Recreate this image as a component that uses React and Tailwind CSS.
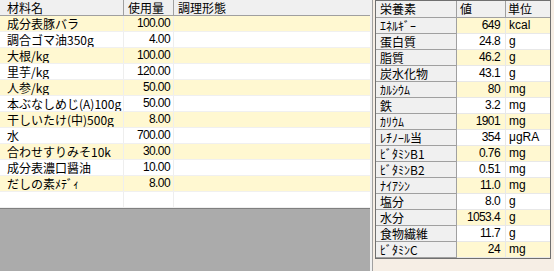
import React from "react";

const ingredients = [
  ["成分表豚バラ", "100.00"],
  ["調合ゴマ油350g", "4.00"],
  ["大根/kg", "100.00"],
  ["里芋/kg", "120.00"],
  ["人参/kg", "50.00"],
  ["本ぶなしめじ(A)100g", "50.00"],
  ["干しいたけ(中)500g", "8.00"],
  ["水", "700.00"],
  ["合わせすりみそ10k", "30.00"],
  ["成分表濃口醤油", "10.00"],
  ["だしの素ﾒﾃﾞｨ", "8.00"],
  ["", ""],
];

const nutrients = [
  ["ｴﾈﾙｷﾞｰ", "649", "kcal"],
  ["蛋白質", "24.8", "g"],
  ["脂質", "46.2", "g"],
  ["炭水化物", "43.1", "g"],
  ["ｶﾙｼｳﾑ", "80", "mg"],
  ["鉄", "3.2", "mg"],
  ["ｶﾘｳﾑ", "1901", "mg"],
  ["ﾚﾁﾉｰﾙ当", "354", "μgRA"],
  ["ﾋﾞﾀﾐﾝB1", "0.76", "mg"],
  ["ﾋﾞﾀﾐﾝB2", "0.51", "mg"],
  ["ﾅｲｱｼﾝ", "11.0", "mg"],
  ["塩分", "8.0", "g"],
  ["水分", "1053.4", "g"],
  ["食物繊維", "11.7", "g"],
  ["ﾋﾞﾀﾐﾝC", "24", "mg"],
];

const jp = { fontFamily: '"Noto Sans CJK JP", "Liberation Sans", sans-serif' };
const num = { fontFamily: '"Liberation Sans", "Noto Sans CJK JP", sans-serif' };

export default function App() {
  return (
    <div className="flex w-[554px] h-[271px] overflow-hidden bg-[#f6eee5] text-[12px] text-black" style={jp}>
      {/* Left panel */}
      <div className="flex flex-col w-[370px] h-full bg-[#ababab]">
        <div className="bg-white border-b border-[#808080]">
          <div className="grid grid-cols-[124px_50px_1fr] h-[16px] leading-[15px] bg-[#f0f0f0] border-b border-[#a0a0a0]">
            <div className="pl-[7px] border-r border-[#a0a0a0]">材料名</div>
            <div className="pl-[4px] border-r border-[#a0a0a0]">使用量</div>
            <div className="pl-[4px]">調理形態</div>
          </div>
          {ingredients.map((r, i) => (
            <div
              key={i}
              className={`grid grid-cols-[124px_50px_1fr] h-[16px] leading-[15px] border-b border-[#f0f0f0] ${
                i % 2 === 0 && r[0] ? "bg-[#fff8d1]" : "bg-white"
              }`}
            >
              <div className="pl-[7px] border-r border-[#eeeeee] whitespace-nowrap overflow-hidden">{r[0]}</div>
              <div className="pr-[3px] text-right border-r border-[#eeeeee] tracking-[-0.6px]" style={num}>
                {r[1]}
              </div>
              <div></div>
            </div>
          ))}
        </div>
        <div className="flex-1"></div>
      </div>

      {/* Splitter */}
      <div className="w-[2px] h-full bg-[#f0f0f0]"></div>
      <div className="w-[1px] h-full bg-[#a0a0a0]"></div>
      <div className="w-[2px] h-full bg-[#f6eee5]"></div>

      {/* Right panel */}
      <div className="flex flex-col h-full">
        <div className="w-[176px] border border-[#707070] bg-white">
          <div className="grid grid-cols-[81px_49px_1fr] h-[17px] leading-[16px] bg-[#f0f0f0] border-b border-[#a0a0a0]">
            <div className="pl-[4px] border-r border-[#a0a0a0]">栄養素</div>
            <div className="pl-[3px] border-r border-[#a0a0a0]">値</div>
            <div className="pl-[2px]">単位</div>
          </div>
          {nutrients.map((r, i) => (
            <div key={i} className="grid grid-cols-[81px_49px_1fr] h-[16px] leading-[15px]">
              <div className="pl-[4px] bg-[#f0f0f0] border-r border-b border-[#a0a0a0] whitespace-nowrap">{r[0]}</div>
              <div
                className={`pr-[5px] text-right border-r border-b border-[#e8e8e8] tracking-[-0.6px] ${
                  i % 2 === 0 ? "bg-[#fff8d1]" : "bg-white"
                }`}
                style={num}
              >
                {r[1]}
              </div>
              <div
                className={`pl-[3px] border-b border-[#e8e8e8] ${i % 2 === 0 ? "bg-[#fff8d1]" : "bg-white"}`}
                style={num}
              >
                {r[2]}
              </div>
            </div>
          ))}
        </div>
      </div>
    </div>
  );
}
